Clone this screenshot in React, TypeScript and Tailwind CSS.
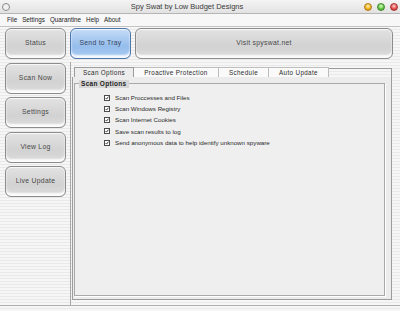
import React from 'react';

const stripes =
  'bg-[repeating-linear-gradient(to_bottom,#f6f6f6_0px,#f6f6f6_2px,#e9e9e9_2px,#e9e9e9_3px)]';

const NavButton: React.FC<{ label: string; blue?: boolean; className?: string }> = ({
  label,
  blue,
  className = '',
}) => (
  <div
    className={
      'flex items-center justify-center rounded-[6px] border shadow-[inset_0_-3px_2px_rgba(255,255,255,0.9),inset_0_1px_1px_rgba(255,255,255,0.8)] text-[6.8px] tracking-[0.3px] ' +
      (blue
        ? 'border-[#4f76a8] bg-[linear-gradient(to_bottom,#c4dbf7,#96bdec_60%,#a9cbf3)] text-[#34445e] '
        : 'border-[#8c8c8c] bg-[linear-gradient(to_bottom,#e2e2e2,#d2d2d2_60%,#dcdcdc)] text-[#484848] ') +
      className
    }
  >
    {label}
  </div>
);

const Check: React.FC<{ label: string }> = ({ label }) => (
  <div className="flex h-[11.25px] items-center gap-[5px]">
    <div className="flex h-[6px] w-[6px] items-center justify-center border border-[#4a4a4a] bg-white">
      <svg width="6" height="6" viewBox="0 0 6 6">
        <path d="M0.8 3 L2.4 4.6 L5.2 1" fill="none" stroke="#111" strokeWidth="1.2" />
      </svg>
    </div>
    <span className="text-[6.2px] text-[#2a2a2a]">{label}</span>
  </div>
);

export default function App() {
  const tabs = ['Scan Options', 'Proactive Protection', 'Schedule', 'Auto Update'];
  const tabWidths = ['w-[60px]', 'w-[85px]', 'w-[50px]', 'w-[60px]'];

  return (
    <div
      className={`flex h-[311px] w-[400px] flex-col overflow-hidden ${stripes} font-['Liberation_Sans',Arial,sans-serif] text-[#222]`}
    >
      {/* Title bar */}
      <div className="flex h-[14px] items-center justify-between border-b border-[#b5b5b5] bg-[linear-gradient(to_bottom,#f4f4f4,#e2e2e2)] px-[2px]">
        <div className="h-[8px] w-[8px] rounded-full border border-[#8a8a8a] bg-[#f0f0f0]" />
        <span className="text-[7.5px] text-[#3a3a3a]">Spy Swat by Low Budget Designs</span>
        <div className="flex gap-[5px]">
          <div className="h-[8px] w-[8px] rounded-full border border-[#b07a10] bg-[radial-gradient(circle_at_50%_35%,#fff4b0,#f0b020_60%,#d08000)]" />
          <div className="h-[8px] w-[8px] rounded-full border border-[#3d8a2a] bg-[radial-gradient(circle_at_50%_35%,#dfffc8,#5cc040_60%,#2f9a1e)]" />
          <div className="h-[8px] w-[8px] rounded-full border border-[#a83030] bg-[radial-gradient(circle_at_50%_35%,#ffd0d0,#e04848_60%,#b82020)]" />
        </div>
      </div>

      {/* Menu bar */}
      <div className="flex h-[13px] items-center gap-[5px] border-b border-[#c4c4c4] bg-[#f7f7f7] pl-[7px] text-[6.3px] text-[#222]">
        <span>File</span>
        <span>Settings</span>
        <span>Quarantine</span>
        <span>Help</span>
        <span>About</span>
      </div>

      {/* Body */}
      <div className="flex h-[279px] border-b border-[#b0b0b0] pt-[1px]">
        {/* Left buttons */}
        <div className="flex w-[70px] flex-col gap-[3.5px] pl-[5px]">
          <NavButton label="Status" className="h-[31px] w-[61px]" />
          <NavButton label="Scan Now" className="h-[31px] w-[61px]" />
          <NavButton label="Settings" className="h-[31px] w-[61px]" />
          <NavButton label="View Log" className="h-[31px] w-[61px]" />
          <NavButton label="Live Update" className="h-[31px] w-[61px]" />
        </div>

        {/* Right side */}
        <div className="flex flex-1 flex-col">
          <div className="flex h-[31px] gap-[4px] pr-[7px]">
            <NavButton label="Send to Tray" blue className="w-[61px]" />
            <NavButton label="Visit spyswat.net" className="flex-1" />
          </div>

          <div className="mt-[3px] flex flex-1 flex-col border-l border-[#a8a8a8] pb-[5px] pl-[1px] pr-[8px] pt-[5px]">
            {/* Tab strip */}
            <div className="flex h-[10px]">
              <div className="w-[2px]" />
              {tabs.map((t, i) => (
                <div
                  key={t}
                  className={`${tabWidths[i]} flex items-center justify-center border border-b-0 border-[#9c9c9c] text-[6.3px] tracking-[0.35px] text-[#2a2a2a] ${
                    i === 0 ? 'bg-[#ededed]' : 'bg-[#fafafa] border-b border-[#bdbdbd]'
                  } ${i > 0 ? 'border-l-0' : ''}`}
                >
                  {t}
                </div>
              ))}
              <div className="mt-[1px] flex-1 border-r border-t border-[#9c9c9c]" />
            </div>

            {/* Tab body */}
            <div className="flex flex-1 flex-col border-b border-l border-r border-[#9c9c9c] bg-[#ececec] pb-[3px] pl-[1px] pr-[6px] pt-[6px]">
              <div className="relative flex-1 border border-[#a9a9a9] bg-[#efefef] pl-[29px] pt-[8px] shadow-[1px_1px_0_#fff]">
                <div className="absolute -top-[4px] left-[4px] bg-[#d6d6d6] px-[2px] text-[6.5px] font-bold leading-[8px] tracking-[0.3px] text-[#222]">
                  Scan Options
                </div>
                <Check label="Scan Proccesses and Files" />
                <Check label="Scan Windows Registry" />
                <Check label="Scan Internet Cookies" />
                <Check label="Save scan results to log" />
                <Check label="Send anonymous data to help identify unknown spyware" />
              </div>
            </div>
          </div>
        </div>
      </div>
    </div>
  );
}
